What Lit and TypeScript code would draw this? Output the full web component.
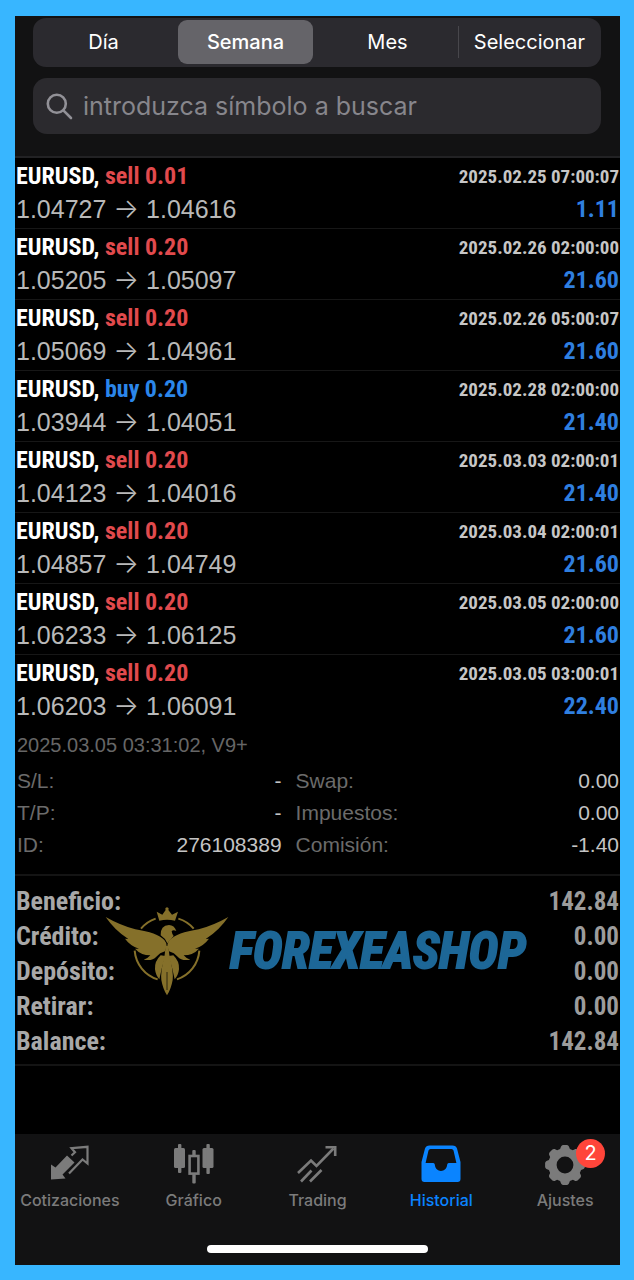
import { LitElement, html, svg, css } from "lit";
import { customElement, state } from "lit/decorators.js";
import { classMap } from "lit/directives/class-map.js";

interface Deal {
  symbol: string;
  side: "sell" | "buy";
  volume: string;
  open: string;
  close: string;
  time: string;
  profit: string;
}

const deal = (side: "sell" | "buy", volume: string, open: string, close: string, time: string, profit: string): Deal => ({
  symbol: "EURUSD", side, volume, open, close, time, profit,
});

const DEALS: Deal[] = [
  deal("sell", "0.01", "1.04727", "1.04616", "2025.02.25 07:00:07", "1.11"),
  deal("sell", "0.20", "1.05205", "1.05097", "2025.02.26 02:00:00", "21.60"),
  deal("sell", "0.20", "1.05069", "1.04961", "2025.02.26 05:00:07", "21.60"),
  deal("buy", "0.20", "1.03944", "1.04051", "2025.02.28 02:00:00", "21.40"),
  deal("sell", "0.20", "1.04123", "1.04016", "2025.03.03 02:00:01", "21.40"),
  deal("sell", "0.20", "1.04857", "1.04749", "2025.03.04 02:00:01", "21.60"),
  deal("sell", "0.20", "1.06233", "1.06125", "2025.03.05 02:00:00", "21.60"),
  deal("sell", "0.20", "1.06203", "1.06091", "2025.03.05 03:00:01", "22.40"),
];

const DETAILS = [
  ["S/L:", "-"], ["Swap:", "0.00"],
  ["T/P:", "-"], ["Impuestos:", "0.00"],
  ["ID:", "276108389"], ["Comisión:", "-1.40"],
];

const TOTALS = [
  ["Beneficio:", "142.84"],
  ["Crédito:", "0.00"],
  ["Depósito:", "0.00"],
  ["Retirar:", "0.00"],
  ["Balance:", "142.84"],
];

const PERIODS = ["Día", "Semana", "Mes", "Seleccionar"];

// Gear outline: eight rounded teeth around a hub.
const gearPath = (() => {
  const parts: string[] = [];
  const at = (r: number, deg: number) => {
    const a = (deg * Math.PI) / 180;
    return `${(20 + r * Math.sin(a)).toFixed(2)} ${(20 - r * Math.cos(a)).toFixed(2)}`;
  };
  for (let i = 0; i < 8; i++) {
    const c = i * 45;
    parts.push(`${i ? "L" : "M"}${at(16.8, c - 17)} L${at(19, c - 12)} Q${at(20, c - 9)} ${at(20, c - 6)} L${at(20, c + 6)} Q${at(20, c + 9)} ${at(19, c + 12)} L${at(16.8, c + 17)}`);
  }
  return parts.join(" ") + " Z M28.4 20 A8.4 8.4 0 1 0 11.6 20 A8.4 8.4 0 1 0 28.4 20 Z";
})();

const TABS = [
  {
    label: "Cotizaciones",
    icon: svg`<path d="M1 19.5 L5.5 22.5 L17 10.5 L24.5 17.5 L12.5 29.5 L15.5 33.5 L1 34.5 Z" fill="currentColor"/>
      <path d="M19 28.5 L32.5 14.5 L37.5 18.5 L37.5 1.8 L21.5 3.2 L25 7.2 L21.5 10.5" fill="none" stroke="currentColor" stroke-width="2.2"/>`,
  },
  {
    label: "Gráfico",
    icon: svg`<g fill="currentColor"><rect x="0" y="3" width="11" height="20" rx="1.5"/><rect x="4" y="-1" width="3.4" height="29" rx="1"/>
      <rect x="28.5" y="3" width="11" height="20" rx="1.5"/><rect x="32.4" y="-1" width="3.4" height="30" rx="1"/>
      <rect x="18.3" y="5" width="3.4" height="6" rx="1"/><rect x="18.3" y="29" width="3.4" height="9.5" rx="1"/></g>
      <rect x="15.6" y="11" width="8.8" height="17.6" fill="none" stroke="currentColor" stroke-width="2.6"/>`,
  },
  {
    label: "Trading",
    icon: svg`<g fill="none" stroke="currentColor" stroke-width="2.6"><path d="M1 28 L14 15.5 L19.5 21 L36.5 3.5"/><path d="M28.5 2.2 H38.2 V11"/>
      <path d="M4 36.5 L14.5 25.5"/><path d="M13 36.5 L24.5 25"/></g>`,
  },
  {
    label: "Historial",
    icon: svg`<path fill-rule="evenodd" fill="currentColor" d="M8.5 .5 H31.5 Q35 .5 36 3.5 L39.5 17 V34 Q39.5 37 36.5 37 H3.5 Q.5 37 .5 34 V17 L4 3.5 Q5 .5 8.5 .5 Z
      M9.5 4 Q8 4 7.5 5.5 L4.6 18 H12.3 Q13.6 18 13.8 19.5 C14.4 28 25.6 28 26.2 19.5 Q26.4 18 27.7 18 H35.4 L32.5 5.5 Q32 4 30.5 4 Z"/>`,
  },
  { label: "Ajustes", badge: "2", icon: svg`<path fill-rule="evenodd" fill="currentColor" d=${gearPath} />` },
];

const wing = svg`<path d="M46 81 Q90 106 135 118 Q200 128 222 150 Q229 158 229 168 L224 184 Q208 188 198 200 Q186 214 160 209 Q172 206 180 196
  Q152 196 134 176 L146 176 Q120 168 104 146 L114 147 Q74 122 46 81 Z"/>
  <path d="M211 196 Q192 214 194 238 Q196 256 207 268 Q213 236 225 198 Z"/>`;

@customElement("app-root")
export class AppRoot extends LitElement {
  @state() private period = "Semana";
  @state() private tab = "Historial";

  static styles = css`
    :host { display: block; font-family: "Liberation Sans", Arial, sans-serif; }
    * { box-sizing: border-box; }
    button, input { font: inherit; color: inherit; border: 0; background: none; padding: 0; margin: 0; }
    .frame { min-height: 100vh; padding: 16px 14px 15px 15px; background: #38b6ff; display: flex; }
    .phone { flex: 1; min-width: 0; display: flex; flex-direction: column; background: #000; overflow: hidden; }
    .condensed { font-family: "Roboto Condensed", "Liberation Sans", sans-serif; font-weight: 700; }

    .head { background: #121213; padding: 2px 19px 22px 18px; border-bottom: 2px solid #222224;
      font-family: Inter, sans-serif; display: flex; flex-direction: column; gap: 11px; }
    .segments { height: 49px; display: grid; grid-template-columns: repeat(4, 1fr); padding: 2px 0;
      background: #2b2a2f; border-radius: 13px; }
    .segment { position: relative; margin: 0 4px 1px 3px; border-radius: 9px; color: #fff; font-size: 20px; white-space: nowrap; }
    .segment.on { background: #656469; font-weight: 500; }
    .segment.divided::before { content: ""; position: absolute; left: -4px; top: 6px; bottom: 6px; width: 1px; background: #48474c; }
    .search { height: 56px; display: flex; align-items: center; gap: 10px; padding: 0 13px;
      background: #2b2a2e; border-radius: 14px; color: #929197; }
    .search svg { width: 27px; height: 27px; flex: none; }
    .search input { flex: 1; min-width: 0; font-size: 25px; outline: 0; }
    .search input::placeholder { color: #87868c; opacity: 1; }

    .deals { list-style: none; margin: 0; padding: 0; }
    .deal { padding: 2px 1px; border-bottom: 1px solid #171717; }
    .deal:last-child { border-bottom-color: #000; }
    .line { display: flex; justify-content: space-between; line-height: 33px; height: 33px; white-space: nowrap; }
    .name { font-size: 24px; color: #fff; }
    .sell { color: #e14a4d; }
    .buy { color: #2b86ea; }
    .time { font-size: 19px; color: #c6c6c6; }
    .prices { font-size: 25px; color: #b9b9b9; }
    .arrow { font-family: Inter, sans-serif; font-weight: 300; font-size: 27px; line-height: 1; }
    .profit { font-size: 24px; color: #2f7fe0; }

    .details { padding: 2px 1px 13px 2px; border-bottom: 2px solid #141414; color: #6b6b6b; }
    .closed { margin: 0; font-size: 20px; line-height: 34px; color: #666; }
    .pairs { margin: 3px 0 0; display: grid; grid-template-columns: 9fr 11fr; column-gap: 14px; }
    .pair { display: flex; justify-content: space-between; font-size: 21px; line-height: 32px; }
    .pair dd { margin: 0; color: #c4c4c4; }

    .summary { position: relative; padding: 8px 1px 5px; border-bottom: 2px solid #141414; }
    .totals { width: 100%; border-collapse: collapse; color: #a8a8a8; line-height: 35px; }
    .totals th { padding: 0; text-align: left; font-size: 26px; font-weight: 700; height: 35px; }
    .totals td { padding: 0; text-align: right; font-size: 25px; color: #9c9c9c; }
    .watermark { position: absolute; left: 90px; top: 29px; display: flex; align-items: center; gap: 1px; pointer-events: none; }
    .watermark svg { width: 124px; height: 92px; }
    .brand { font-size: 50px; line-height: 48px; font-style: italic; color: #1d6797; -webkit-text-stroke: 2px #1d6797; }

    .bar { margin-top: auto; background: #121213; }
    .tabs { display: grid; grid-template-columns: repeat(5, 1fr); margin: 0 -7px; }
    .tab { display: flex; flex-direction: column; align-items: center; gap: 4px; padding: 11px 0 10px; color: #7b7b7b;
      font-family: Inter, sans-serif; font-size: 16px; line-height: 22px; font-weight: 500; }
    .tab.on { color: #0a84ff; }
    .glyph { position: relative; width: 40px; height: 40px; }
    .glyph svg { display: block; width: 40px; height: 40px; overflow: visible; }
    .badge { position: absolute; left: 31px; top: -6px; width: 29px; height: 29px; border-radius: 50%;
      background: #ff453a; color: #fff; font-size: 20px; line-height: 29px; font-weight: 400; text-align: center; }
    .home { width: 221px; height: 8px; margin: 24px auto 12px; border-radius: 4px; background: #fff; }
  `;

  private renderDeal(d: Deal) {
    return html`<li class="deal">
      <div class="line condensed">
        <span class="name">${d.symbol}, <span class=${d.side}>${d.side} ${d.volume}</span></span>
        <time class="time">${d.time}</time>
      </div>
      <div class="line">
        <span class="prices">${d.open} <span class="arrow">→</span> ${d.close}</span>
        <span class="profit condensed">${d.profit}</span>
      </div>
    </li>`;
  }

  private renderEagle() {
    return svg`<svg viewBox="44 45 372 276" fill="#85702a" aria-hidden="true">
      <g fill="none" stroke="#85702a" stroke-width="6">
        <path d="M152 116 A98 98 0 0 1 196 86"/><path d="M264 86 A98 98 0 0 1 310 116"/>
        <path d="M133 182 A98 98 0 0 0 202 268"/><path d="M327 182 A98 98 0 0 1 260 268"/>
      </g>
      <path d="M207 92 L199 65 L216 74 L226 60 A5 5 0 1 1 234 60 L245 74 L263 65 L254 92 Q230 86 207 92 Z"/>
      <path d="M211 136 Q210 106 236 105 Q252 105 258 123 Q248 118 244 124 Q245 132 250 138 L231 160 Q224 144 211 136 Z"/>
      ${wing}
      <g transform="translate(460 0) scale(-1 1)">${wing}</g>
      <path d="M226 168 H234 L237 194 Q250 246 247 270 Q242 298 230 316 Q218 298 213 270 Q210 246 223 194 Z"/>
      <path d="M230 246 V300" stroke="#000" stroke-width="2"/>
    </svg>`;
  }

  render() {
    return html`<div class="frame"><div class="phone">
      <header class="head">
        <div class="segments">
          ${PERIODS.map((p, i) => html`<button
            class=${classMap({ segment: true, on: p === this.period, divided: i === 3 })}
            aria-pressed=${p === this.period ? "true" : "false"}
            @click=${() => (this.period = p)}>${p}</button>`)}
        </div>
        <label class="search">
          <svg viewBox="0 0 27 27" fill="none" stroke="currentColor" stroke-width="2.6" stroke-linecap="round" aria-hidden="true">
            <circle cx="10.8" cy="10.8" r="9"/><path d="M17.6 17.6 L25 25"/>
          </svg>
          <input type="text" placeholder="introduzca símbolo a buscar" aria-label="introduzca símbolo a buscar">
        </label>
      </header>
      <main>
        <ul class="deals">${DEALS.map((d) => this.renderDeal(d))}</ul>
        <section class="details">
          <p class="closed">2025.03.05 03:31:02, V9+</p>
          <dl class="pairs">${DETAILS.map(([k, v]) => html`<div class="pair"><dt>${k}</dt><dd>${v}</dd></div>`)}</dl>
        </section>
        <section class="summary">
          <table class="totals condensed">
            <tbody>${TOTALS.map(([k, v]) => html`<tr><th scope="row">${k}</th><td>${v}</td></tr>`)}</tbody>
          </table>
          <div class="watermark">${this.renderEagle()}<span class="brand condensed">FOREXEASHOP</span></div>
        </section>
      </main>
      <footer class="bar">
        <nav class="tabs">
          ${TABS.map((t) => html`<button class=${classMap({ tab: true, on: t.label === this.tab })} @click=${() => (this.tab = t.label)}>
            <span class="glyph"><svg viewBox="0 0 40 40" aria-hidden="true">${t.icon}</svg>
              ${t.badge ? html`<span class="badge">${t.badge}</span>` : ""}</span>
            <span>${t.label}</span>
          </button>`)}
        </nav>
        <div class="home"></div>
      </footer>
    </div></div>`;
  }
}
